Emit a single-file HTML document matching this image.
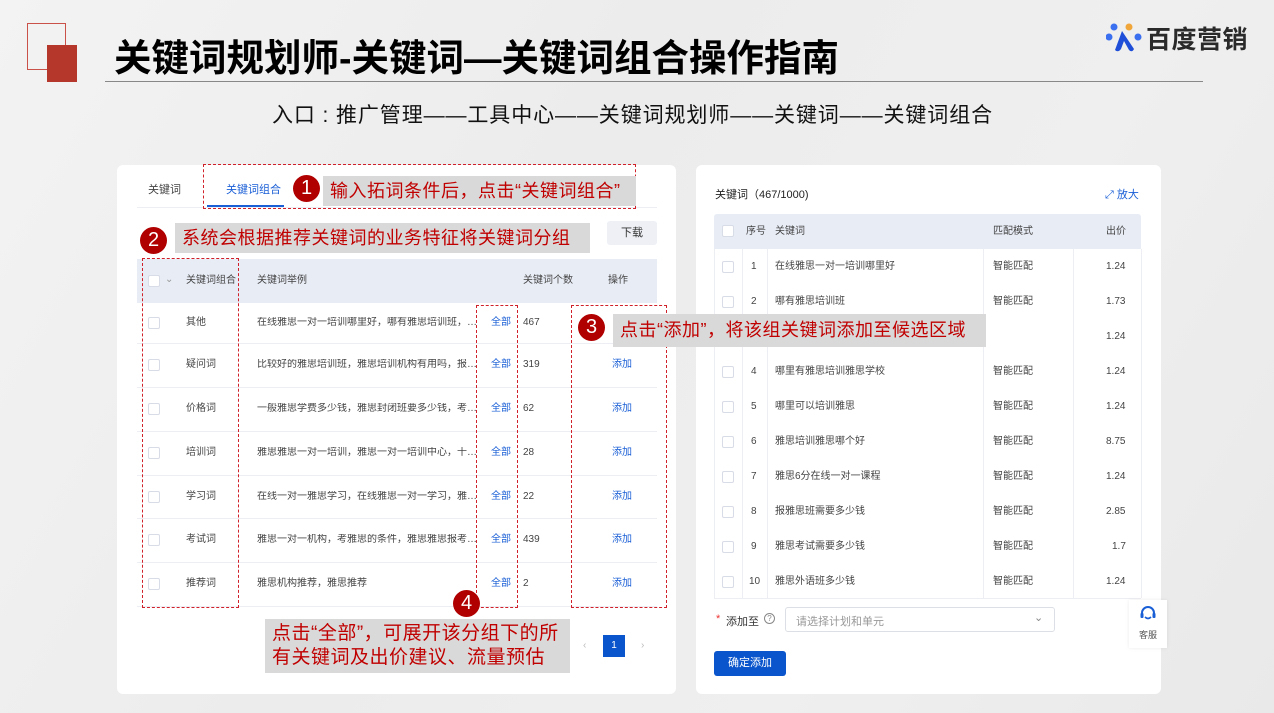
<!DOCTYPE html>
<html><head><meta charset="utf-8"><style>
*{margin:0;padding:0;box-sizing:border-box}
body{width:1274px;height:713px;overflow:hidden;position:relative;background:linear-gradient(120deg,#f3f3f3 0%,#ececec 40%,#efefef 70%,#e9e9e9 100%);font-family:"Liberation Sans","Noto Sans CJK SC",sans-serif;color:#333}
.a{position:absolute;white-space:nowrap}
.panel{position:absolute;background:#fff;border-radius:6px}
.t{font-size:10px;color:#444;line-height:12px}
.ex{width:228px;overflow:hidden;text-overflow:ellipsis}
.cb{position:absolute;width:12px;height:12px;border:1px solid #d8dce6;border-radius:2px;background:#fff}
.blue{color:#1a5fd6}
.dash{position:absolute;border:1.5px dashed #d0202a}
.circ{position:absolute;width:27px;height:27px;border-radius:50%;background:#b00000;color:#fff;font-size:20px;text-align:center;line-height:27px}
.lab{position:absolute;background:#d9d9d9;color:#c00000;font-size:18px;line-height:30px;padding-left:7px;white-space:nowrap;letter-spacing:0.5px}
.hl{position:absolute;height:1px;background:#eceef3}
.vl{position:absolute;width:1px;background:#eceef3}
</style></head><body>
<div class="a" style="left:27px;top:23px;width:39px;height:47px;border:1.5px solid #c9514a"></div>
<div class="a" style="left:47px;top:45px;width:30px;height:37px;background:#b5362b"></div>
<div class="a" style="left:114px;top:33px;font-size:37.5px;font-weight:bold;color:#000;line-height:50px">关键词规划师-关键词—关键词组合操作指南</div>
<div class="a" style="left:105px;top:81px;width:1098px;height:1px;background:#888"></div>
<div class="a" style="left:272px;top:102px;font-size:21px;color:#111;line-height:28px;letter-spacing:0.9px">入口 : 推广管理——工具中心——关键词规划师——关键词——关键词组合</div>
<svg class="a" style="left:1106px;top:23px" width="40" height="32" viewBox="0 0 40 32">
<circle cx="8" cy="4" r="3.5" fill="#3a6ff0"/><circle cx="23" cy="4" r="3.5" fill="#f0a63a"/>
<circle cx="3" cy="14" r="3.5" fill="#3a6ff0"/><circle cx="32" cy="14" r="3.5" fill="#3a6ff0"/>
<path d="M16 8 L9 27 Q12 30 15 26 L18 18 L23 27 Q26 30 28 26 Z" fill="#1f4fd8"/></svg>
<div class="a" style="left:1146px;top:24px;font-size:25px;font-weight:bold;color:#2a2a2a;line-height:32px;letter-spacing:0.5px">百度营销</div>

<div class="panel" style="left:117px;top:165px;width:559px;height:529px"></div>
<div class="a t" style="left:148px;top:184px;font-size:11px">关键词</div>
<div class="a t blue" style="left:226px;top:184px;font-size:11px">关键词组合</div>
<div class="a" style="left:207px;top:205px;width:77px;height:2px;background:#1a5fd6"></div>
<div class="hl" style="left:137px;top:207px;width:520px"></div>
<div class="a" style="left:607px;top:221px;width:50px;height:24px;background:#eef0f5;border-radius:3px;font-size:11px;color:#333;text-align:center;line-height:24px">下载</div>
<div class="a" style="left:137px;top:259px;width:520px;height:44px;background:#e8ecf5"></div>
<div class="cb" style="left:148px;top:275px"></div>
<div class="a t" style="left:165px;top:274px;color:#999">⌄</div>
<div class="a t" style="left:186px;top:275px">关键词组合</div>
<div class="a t" style="left:257px;top:275px">关键词举例</div>
<div class="a t" style="left:523px;top:275px">关键词个数</div>
<div class="a t" style="left:608px;top:275px">操作</div>

<div class="cb" style="left:148px;top:317px"></div><div class="a t" style="left:186px;top:317px">其他</div><div class="a t ex" style="left:257px;top:317px">在线雅思一对一培训哪里好，哪有雅思培训班，雅思一对一</div><div class="a t blue" style="left:491px;top:317px">全部</div><div class="a t" style="left:523px;top:317px">467</div>
<div class="hl" style="left:137px;top:343px;width:520px"></div>
<div class="cb" style="left:148px;top:359px"></div><div class="a t" style="left:186px;top:359px">疑问词</div><div class="a t ex" style="left:257px;top:359px">比较好的雅思培训班，雅思培训机构有用吗，报考雅思需要</div><div class="a t blue" style="left:491px;top:359px">全部</div><div class="a t" style="left:523px;top:359px">319</div><div class="a t blue" style="left:612px;top:359px">添加</div>
<div class="hl" style="left:137px;top:387px;width:520px"></div>
<div class="cb" style="left:148px;top:403px"></div><div class="a t" style="left:186px;top:403px">价格词</div><div class="a t ex" style="left:257px;top:403px">一般雅思学费多少钱，雅思封闭班要多少钱，考雅思需要多少</div><div class="a t blue" style="left:491px;top:403px">全部</div><div class="a t" style="left:523px;top:403px">62</div><div class="a t blue" style="left:612px;top:403px">添加</div>
<div class="hl" style="left:137px;top:431px;width:520px"></div>
<div class="cb" style="left:148px;top:447px"></div><div class="a t" style="left:186px;top:447px">培训词</div><div class="a t ex" style="left:257px;top:447px">雅思雅思一对一培训，雅思一对一培训中心，十佳雅思培训</div><div class="a t blue" style="left:491px;top:447px">全部</div><div class="a t" style="left:523px;top:447px">28</div><div class="a t blue" style="left:612px;top:447px">添加</div>
<div class="hl" style="left:137px;top:475px;width:520px"></div>
<div class="cb" style="left:148px;top:491px"></div><div class="a t" style="left:186px;top:491px">学习词</div><div class="a t ex" style="left:257px;top:491px">在线一对一雅思学习，在线雅思一对一学习，雅思雅思学习</div><div class="a t blue" style="left:491px;top:491px">全部</div><div class="a t" style="left:523px;top:491px">22</div><div class="a t blue" style="left:612px;top:491px">添加</div>
<div class="hl" style="left:137px;top:518px;width:520px"></div>
<div class="cb" style="left:148px;top:534px"></div><div class="a t" style="left:186px;top:534px">考试词</div><div class="a t ex" style="left:257px;top:534px">雅思一对一机构，考雅思的条件，雅思雅思报考，雅思考试</div><div class="a t blue" style="left:491px;top:534px">全部</div><div class="a t" style="left:523px;top:534px">439</div><div class="a t blue" style="left:612px;top:534px">添加</div>
<div class="hl" style="left:137px;top:562px;width:520px"></div>
<div class="cb" style="left:148px;top:578px"></div><div class="a t" style="left:186px;top:578px">推荐词</div><div class="a t" style="left:257px;top:578px">雅思机构推荐，雅思推荐</div><div class="a t blue" style="left:491px;top:578px">全部</div><div class="a t" style="left:523px;top:578px">2</div><div class="a t blue" style="left:612px;top:578px">添加</div>
<div class="hl" style="left:137px;top:606px;width:520px"></div>

<div class="a t" style="left:583px;top:640px;color:#bbb">‹</div>
<div class="a" style="left:603px;top:635px;width:22px;height:22px;background:#0a55cc;color:#fff;font-size:10px;text-align:center;line-height:22px">1</div>
<div class="a t" style="left:641px;top:640px;color:#bbb">›</div>

<div class="panel" style="left:696px;top:165px;width:465px;height:529px"></div>
<div class="a" style="left:715px;top:186px;font-size:11px;color:#222">关键词（467/1000)</div>
<div class="a blue" style="left:1105px;top:186px;font-size:11px">⤢ 放大</div>
<div class="a" style="left:714px;top:214px;width:427px;height:35px;background:#e8ecf5;border-radius:3px 3px 0 0"></div>
<div class="cb" style="left:722px;top:225px"></div>
<div class="a t" style="left:746px;top:226px">序号</div><div class="a t" style="left:775px;top:226px">关键词</div><div class="a t" style="left:993px;top:226px">匹配模式</div><div class="a t" style="left:1106px;top:226px">出价</div>
<div class="vl" style="left:714px;top:249px;height:349px"></div>
<div class="vl" style="left:742px;top:249px;height:349px"></div>
<div class="vl" style="left:767px;top:249px;height:349px"></div>
<div class="vl" style="left:983px;top:249px;height:349px"></div>
<div class="vl" style="left:1073px;top:249px;height:349px"></div>
<div class="vl" style="left:1141px;top:249px;height:349px"></div>
<div class="hl" style="left:714px;top:598px;width:427px"></div>

<div class="cb" style="left:722px;top:261px"></div><div class="a t" style="left:751px;top:261px">1</div><div class="a t" style="left:775px;top:261px">在线雅思一对一培训哪里好</div><div class="a t" style="left:993px;top:261px">智能匹配</div><div class="a t" style="left:1106px;top:261px">1.24</div>
<div class="cb" style="left:722px;top:296px"></div><div class="a t" style="left:751px;top:296px">2</div><div class="a t" style="left:775px;top:296px">哪有雅思培训班</div><div class="a t" style="left:993px;top:296px">智能匹配</div><div class="a t" style="left:1106px;top:296px">1.73</div>
<div class="a t" style="left:1106px;top:331px">1.24</div>
<div class="cb" style="left:722px;top:366px"></div><div class="a t" style="left:751px;top:366px">4</div><div class="a t" style="left:775px;top:366px">哪里有雅思培训雅思学校</div><div class="a t" style="left:993px;top:366px">智能匹配</div><div class="a t" style="left:1106px;top:366px">1.24</div>
<div class="cb" style="left:722px;top:401px"></div><div class="a t" style="left:751px;top:401px">5</div><div class="a t" style="left:775px;top:401px">哪里可以培训雅思</div><div class="a t" style="left:993px;top:401px">智能匹配</div><div class="a t" style="left:1106px;top:401px">1.24</div>
<div class="cb" style="left:722px;top:436px"></div><div class="a t" style="left:751px;top:436px">6</div><div class="a t" style="left:775px;top:436px">雅思培训雅思哪个好</div><div class="a t" style="left:993px;top:436px">智能匹配</div><div class="a t" style="left:1106px;top:436px">8.75</div>
<div class="cb" style="left:722px;top:471px"></div><div class="a t" style="left:751px;top:471px">7</div><div class="a t" style="left:775px;top:471px">雅思6分在线一对一课程</div><div class="a t" style="left:993px;top:471px">智能匹配</div><div class="a t" style="left:1106px;top:471px">1.24</div>
<div class="cb" style="left:722px;top:506px"></div><div class="a t" style="left:751px;top:506px">8</div><div class="a t" style="left:775px;top:506px">报雅思班需要多少钱</div><div class="a t" style="left:993px;top:506px">智能匹配</div><div class="a t" style="left:1106px;top:506px">2.85</div>
<div class="cb" style="left:722px;top:541px"></div><div class="a t" style="left:751px;top:541px">9</div><div class="a t" style="left:775px;top:541px">雅思考试需要多少钱</div><div class="a t" style="left:993px;top:541px">智能匹配</div><div class="a t" style="left:1112px;top:541px">1.7</div>
<div class="cb" style="left:722px;top:576px"></div><div class="a t" style="left:749px;top:576px">10</div><div class="a t" style="left:775px;top:576px">雅思外语班多少钱</div><div class="a t" style="left:993px;top:576px">智能匹配</div><div class="a t" style="left:1106px;top:576px">1.24</div>

<div class="a" style="left:716px;top:613px;font-size:11px;color:#e33">*</div>
<div class="a" style="left:726px;top:613px;font-size:11px;color:#333">添加至</div>
<div class="a" style="left:764px;top:613px;width:11px;height:11px;border:1px solid #888;border-radius:50%;font-size:8px;text-align:center;line-height:9px;color:#888">?</div>
<div class="a" style="left:785px;top:607px;width:270px;height:25px;border:1px solid #dcdfe6;border-radius:3px;background:#fff"></div>
<div class="a" style="left:796px;top:613px;font-size:11px;color:#999">请选择计划和单元</div>
<div class="a" style="left:1034px;top:611px;font-size:11px;color:#888">⌄</div>
<div class="a" style="left:714px;top:651px;width:72px;height:25px;background:#0a55cc;border-radius:3px;color:#fff;font-size:11px;text-align:center;line-height:25px">确定添加</div>

<div class="a" style="left:1129px;top:600px;width:38px;height:48px;background:#fff;box-shadow:0 0 4px rgba(0,0,0,.08)"></div>
<svg class="a" style="left:1139px;top:605px" width="18" height="18" viewBox="0 0 18 18"><path d="M3 10 V8 a6 6 0 0 1 12 0 V10" fill="none" stroke="#1a5fd6" stroke-width="2"/><rect x="1.5" y="8" width="3" height="5" rx="1" fill="#1a5fd6"/><rect x="13.5" y="8" width="3" height="5" rx="1" fill="#1a5fd6"/><path d="M6 12 q3 3 6 0" fill="none" stroke="#1a5fd6" stroke-width="1.6"/></svg>
<div class="a" style="left:1139px;top:628px;font-size:9px;color:#555">客服</div>

<div class="dash" style="left:203px;top:164px;width:433px;height:45px"></div>
<div class="dash" style="left:142px;top:258px;width:97px;height:350px"></div>
<div class="dash" style="left:476px;top:305px;width:42px;height:303px"></div>
<div class="dash" style="left:571px;top:305px;width:96px;height:303px"></div>
<div class="circ" style="left:293px;top:175px">1</div>
<div class="lab" style="left:323px;top:176px;width:313px">输入拓词条件后，点击“关键词组合”</div>
<div class="circ" style="left:140px;top:227px">2</div>
<div class="lab" style="left:175px;top:223px;width:415px">系统会根据推荐关键词的业务特征将关键词分组</div>
<div class="circ" style="left:578px;top:314px">3</div>
<div class="lab" style="left:613px;top:314px;width:373px;height:33px;line-height:33px">点击“添加”，将该组关键词添加至候选区域</div>
<div class="circ" style="left:453px;top:590px">4</div>
<div class="lab" style="left:265px;top:619px;width:305px;height:54px;line-height:24px;padding-top:3px;font-size:19px">点击“全部”，可展开该分组下的所<br>有关键词及出价建议、流量预估</div>
</body></html>
